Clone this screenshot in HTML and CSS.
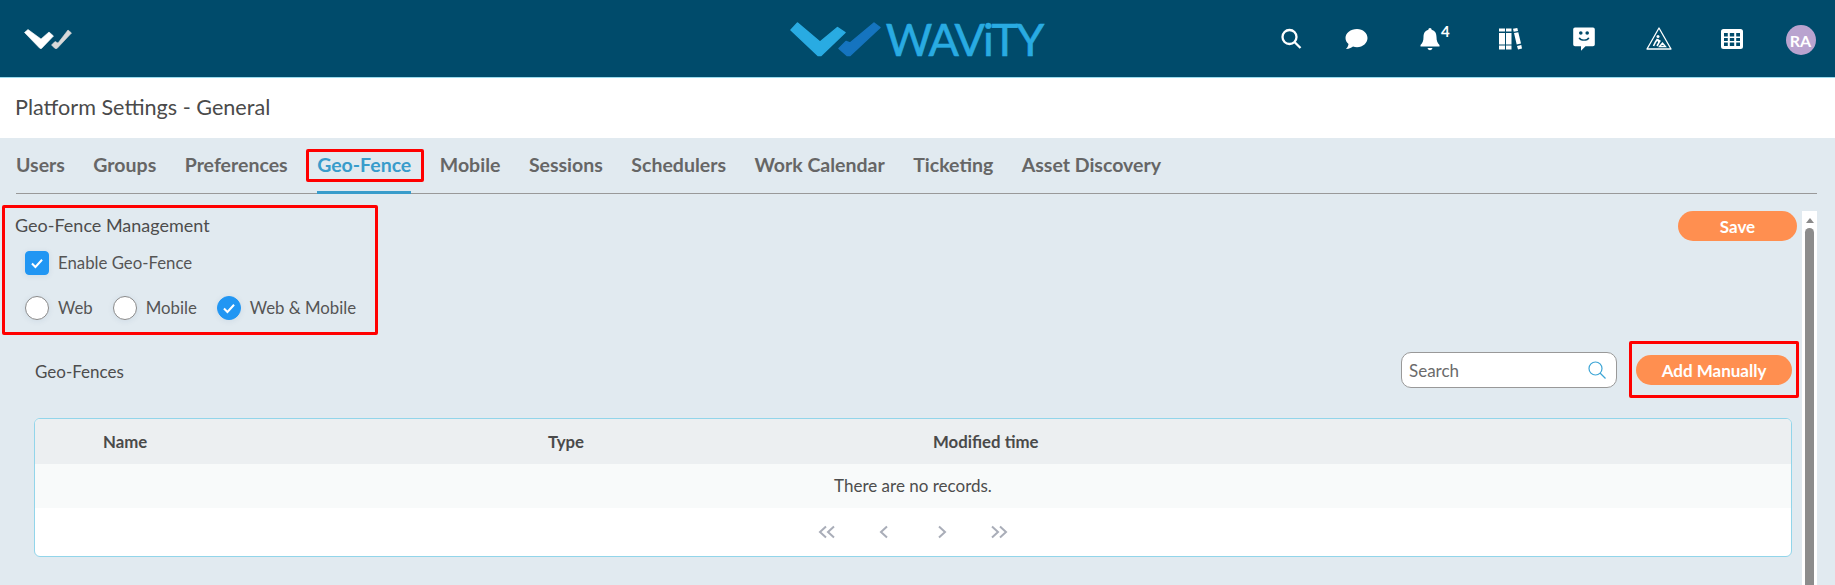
FILE: index.html
```html
<!DOCTYPE html>
<html lang="en">
<head>
<meta charset="utf-8">
<title>Platform Settings - General</title>
<link rel="stylesheet" href="styles.css">
</head>
<body>
<div class="page">
  <header class="topbar">
    <div class="brand-small">
      <svg class="mark-small" viewBox="0 0 48 20"><path class="m-w" d="M0.500 3.500 L4 0.500 L17 10 L25 3 L29.500 7 L17.500 19.500 L16 19.500 Z"/><path class="m-g" d="M27.500 16 L31 12.500 L34 14 L44 1 L47.500 4 L33 19.500 L31 19.500 Z"/></svg>
    </div>
    <div class="brand-main">
      <svg class="mark-main" viewBox="0 0 92 36"><path class="mm-a" d="M1 9 L7.500 2 L30 21 L47.500 6.500 L55 11.500 L31 34.500 L28 34.500 Z"/><path class="mm-b" d="M49 27.500 L56 20.500 L60 22 L84 2 L90 6.500 L60 34.500 L57 34.500 Z"/></svg>
      <span class="brand-name">WAViTY</span>
    </div>
    <nav class="tools">
      <span class="tool"><svg class="ic" width="22" height="22" viewBox="0 0 22 22"><circle cx="9.500" cy="9" r="7" fill="none" stroke="#fff" stroke-width="2.300"/><path d="M14.500 14 L20.500 20" stroke="#fff" stroke-width="2.300"/></svg></span>
      <span class="tool"><svg class="ic" width="24" height="22" viewBox="0 0 24 22"><path fill="#fff" d="M13 1 C6.500 1 1.500 5 1.500 10 C1.500 12.500 2.800 14.600 4.500 16 C4.300 18 3 20 2 21 C5.500 21 7.800 19.500 9 18.600 C10.300 19 11.600 19.200 13 19.200 C19 19.200 23.500 15 23.500 10 C23.500 5 19 1 13 1 Z"/></svg></span>
      <span class="tool tool-bell"><svg class="ic" width="20" height="24" viewBox="0 0 20 24"><path fill="#fff" d="M10 1 C11 1 11.600 1.800 11.600 2.800 C15 3.600 16.500 6.500 16.500 10 C16.500 14 17.500 16 19.500 18 L19.500 19.500 L0.500 19.500 L0.500 18 C2.500 16 3.500 14 3.500 10 C3.500 6.500 5 3.600 8.400 2.800 C8.400 1.800 9 1 10 1 Z M7.500 21 L12.500 21 C12 22.600 11 23.200 10 23.200 C9 23.200 8 22.600 7.500 21 Z"/></svg><sup class="bell-count">4</sup></span>
      <span class="tool"><svg class="ic" width="23" height="22" viewBox="0 0 23 22"><path fill="#fff" d="M0 0.500 H6 V3.500 H0 Z M0 5 H6 V16.500 H0 Z M0 17.500 H6 V21.500 H0 Z M7 0.500 H12.500 V3.500 H7 Z M7 5 H12.500 V16.500 H7 Z M7 17.500 H12.500 V21.500 H7 Z M14 0.800 L18.300 0 L19 3 L14.700 3.800 Z M15 5 L19.300 4.200 L22 15.500 L17.700 16.500 Z M18 18 L22.300 17 L23 20.500 L19 21.500 Z"/></svg></span>
      <span class="tool tool-smile"><svg class="ic" width="22" height="24" viewBox="0 0 22 24"><path fill="#fff" fill-rule="evenodd" d="M2 0.500 H20 Q21.800 0.500 21.800 2.300 V17.500 Q21.800 19.300 20 19.300 H12.500 L8 23.800 V19.300 H2 Q0.200 19.300 0.200 17.500 V2.300 Q0.200 0.500 2 0.500 Z M6 6 a1.800 1.800 0 1 0 3.600 0 a1.800 1.800 0 1 0 -3.600 0 Z M12.400 6 a1.800 1.800 0 1 0 3.600 0 a1.800 1.800 0 1 0 -3.600 0 Z M5.500 11 C6.500 14.800 15.500 14.800 16.500 11 L15 10.500 C14 13 8 13 7 10.500 Z"/></svg></span>
      <span class="tool"><svg class="ic" width="26" height="23" viewBox="0 0 26 23"><path fill="none" stroke="#fff" stroke-width="1.300" stroke-linejoin="round" d="M13 1 L25 22 H1 Z"/><circle cx="12" cy="9.500" r="1.500" fill="#fff"/><path fill="none" stroke="#fff" stroke-width="1.600" d="M11.500 12 L9.500 15 L7.500 19 M11.500 12 L13 15.500 L11 19 M12 13 L14.500 14.500"/><path fill="none" stroke="#fff" stroke-width="1.300" d="M13.500 19.500 L16.500 16 L19.500 19.500 Z"/></svg></span>
      <span class="tool"><svg class="ic" width="22" height="20" viewBox="0 0 22 20"><path fill="#fff" fill-rule="evenodd" d="M2.500 0 H19.500 Q22 0 22 2.500 V17.500 Q22 20 19.500 20 H2.500 Q0 20 0 17.500 V2.500 Q0 0 2.500 0 Z M3 4 V7.500 H6.800 V4 Z M8.800 4 V7.500 H13.200 V4 Z M15.200 4 V7.500 H19 V4 Z M3 9 V12 H6.800 V9 Z M8.800 9 V12 H13.200 V9 Z M15.200 9 V12 H19 V9 Z M3 13.500 V17 H6.800 V13.500 Z M8.800 13.500 V17 H13.200 V13.500 Z M15.200 13.500 V17 H19 V13.500 Z"/></svg></span>
      <span class="tool tool-user"><span class="avatar">RA</span></span>
    </nav>
  </header>

  <div class="titlebar">Platform Settings - General</div>

  <main class="main">
    <div class="tabs">
      <a class="tab">Users</a>
      <a class="tab">Groups</a>
      <a class="tab">Preferences</a>
      <a class="tab tab-active">Geo-Fence</a>
      <a class="tab">Mobile</a>
      <a class="tab">Sessions</a>
      <a class="tab">Schedulers</a>
      <a class="tab">Work Calendar</a>
      <a class="tab">Ticketing</a>
      <a class="tab">Asset Discovery</a>
    </div>

    <div class="panel">
      <div class="content">
        <div class="settings-row">
          <section class="settings">
            <h2 class="section-title">Geo-Fence Management</h2>
            <label class="opt opt-enable"><span class="box checked"><svg viewBox="0 0 24 24" class="tick"><path d="M6.500 12.500 L10.300 16.300 L17.500 8.500"/></svg></span>Enable Geo-Fence</label>
            <div class="radios">
              <label class="opt"><span class="radio"></span>Web</label>
              <label class="opt"><span class="radio"></span>Mobile</label>
              <label class="opt"><span class="radio checked"><svg viewBox="0 0 24 24" class="tick"><path d="M6.500 12.500 L10.300 16.300 L17.500 8.500"/></svg></span>Web &amp; Mobile</label>
            </div>
          </section>
          <button class="btn btn-save">Save</button>
        </div>

        <div class="toolbar">
          <span class="toolbar-title">Geo-Fences</span>
          <div class="search">
            <span class="search-text">Search</span>
            <svg width="20" height="20" viewBox="0 0 20 20"><circle cx="8.500" cy="8.500" r="6.500" fill="none" stroke="#3ea6d6" stroke-width="1.200"/><path d="M13 13 L18.500 18.500" stroke="#3ea6d6" stroke-width="1.200"/></svg>
          </div>
          <button class="btn btn-add">Add Manually</button>
        </div>

        <div class="table">
          <div class="thead"><span class="th th-name">Name</span><span class="th">Type</span><span class="th">Modified time</span></div>
          <div class="empty">There are no records.</div>
          <div class="pager">
            <svg width="18" height="14" viewBox="0 0 18 14"><path d="M8 1.500 L2 7 L8 12.500 M16 1.500 L10 7 L16 12.500"/></svg>
            <svg width="18" height="14" viewBox="0 0 18 14"><path d="M12 1.500 L6 7 L12 12.500"/></svg>
            <svg width="18" height="14" viewBox="0 0 18 14"><path d="M6 1.500 L12 7 L6 12.500"/></svg>
            <svg width="18" height="14" viewBox="0 0 18 14"><path d="M2 1.500 L8 7 L2 12.500 M10 1.500 L16 7 L10 12.500"/></svg>
          </div>
        </div>
      </div>
      <div class="scrollbar"><span class="sb-arrow"></span><span class="sb-thumb"></span></div>
    </div>
  </main>

  <div class="mark-box mark-tab"></div>
  <div class="mark-box mark-settings"></div>
  <div class="mark-box mark-add"></div>
</div>
</body>
</html>
```
FILE: styles.css
```css
* { box-sizing: border-box; }
html, body { margin: 0; height: 100%; }
body { font-family: Lato, "Open Sans", sans-serif; color: #555; background: #e1eaf0; overflow: hidden; }
.page { position: relative; width: 1835px; height: 585px; overflow: hidden; }

.topbar { height: 78px; background: #004b6b; border-bottom: 1px solid #9adbee; display: grid; grid-template-columns: 1fr auto 1fr; align-items: center; }
.brand-small { padding-left: 24px; }
.mark-small { display: block; width: 48px; height: 20px; }
.m-w { fill: #fff; stroke: #fff; stroke-width: .6; stroke-linejoin: round; }
.m-g { fill: #d9d9d9; stroke: #d9d9d9; stroke-width: .6; stroke-linejoin: round; }
.brand-main { display: flex; align-items: center; gap: 4px; margin-right: 3px; }
.mark-main { display: block; width: 92px; height: 36px; margin-top: 1px; }
.mm-a { fill: #29abe2; stroke: #29abe2; stroke-width: 1.500; stroke-linejoin: round; }
.mm-b { fill: #1574bf; stroke: #1574bf; stroke-width: 1.500; stroke-linejoin: round; }
.brand-name { font-size: 45px; line-height: 46px; color: #29abe2; letter-spacing: -2px; -webkit-text-stroke: .6px #29abe2; }
.tools { display: grid; grid-template-columns: 60px 70px 78px 82px 64px 88px 58px 74px; justify-self: end; height: 75px; align-items: center; }
.tool { display: flex; justify-content: center; align-items: center; position: relative; }
.tool-smile { padding-left: 2px; }
.tool-user { padding-left: 5px; }
.ic { display: block; }
.bell-count { position: absolute; left: 50px; top: -3px; font-size: 15px; line-height: 14px; font-weight: 700; color: #fff; margin: 0; }
.avatar { width: 30px; height: 30px; margin-top: 3px; border-radius: 50%; background: #b9a3cf; color: #fff; font-size: 16px; font-weight: 700; display: flex; align-items: center; justify-content: center; }

.titlebar { height: 60px; background: #fff; padding-left: 15px; font-size: 21.600px; line-height: 58px; color: #4a4a4a; }

.main { padding-left: 16px; }
.tabs { display: flex; gap: 28.500px; height: 56px; width: 1801px; border-bottom: 1px solid #999; align-items: stretch; }
.tab { font-size: 19.500px; font-weight: 700; color: #666; line-height: 54px; height: 56px; }
.tab-active { color: #389ccb; border-bottom: 3px solid #389ccb; margin-left: 1px; }

.panel { display: flex; margin-left: -16px; height: 391px; }
.content { width: 1802px; }
.settings-row { display: flex; justify-content: space-between; align-items: flex-start; padding: 17px 5px 0 15px; }
.settings { margin-top: 2px; }
.section-title { margin: 0; font-size: 18px; font-weight: 400; line-height: 24px; color: #4d4d4d; }
.opt { display: flex; align-items: center; gap: 9px; font-size: 16.800px; line-height: 24px; color: #555; }
.opt-enable { margin: 14px 0 0 10px; }
.radios { display: flex; margin: 21px 0 0 10px; gap: 20px; }
.box, .radio { width: 24px; height: 24px; background: #fff; display: block; border: 1px solid #8a8a8a; box-shadow: 0 1px 6px rgba(0, 60, 110, .08); }
.box { border-radius: 4px; }
.radio { border-radius: 50%; }
.box.checked, .radio.checked { background: #2196f3; border-color: #2196f3; }
.tick { display: block; width: 22px; height: 22px; }
.tick path { fill: none; stroke: #fff; stroke-width: 2.200; }

.btn { border: 0; border-radius: 15px; height: 30px; background: #ff8f50; color: #fff; font: 700 17px Lato, sans-serif; padding: 0; }
.btn-save { width: 119px; }
.btn-add { width: 156px; margin-right: 10px; }

.toolbar { display: flex; align-items: center; margin-top: 32px; height: 36px; padding-left: 35px; }
.toolbar-title { font-size: 17px; color: #4d4d4d; flex: 1; margin-top: 2px; }
.search { width: 216px; height: 36px; background: #fff; border: 1px solid #999; border-radius: 10px; display: flex; align-items: center; justify-content: space-between; padding: 0 9px 0 7px; margin-right: 19px; }
.search-text { font-size: 17px; color: #6b6b6b; }

.table { margin: 30px 10px 0 34px; height: 139px; background: #fff; border: 1px solid #92d5ea; border-radius: 6px; overflow: hidden; }
.thead { height: 45px; background: #eceff1; display: grid; grid-template-columns: 513px 385px 1fr; align-items: center; }
.th { font-size: 16.800px; font-weight: 700; color: #4a4a4a; }
.th-name { padding-left: 68px; }
.empty { height: 44px; background: #f8fafa; text-align: center; font-size: 17px; line-height: 44px; color: #4d4d4d; }
.pager { height: 48px; display: flex; justify-content: center; align-items: center; gap: 39.500px; }
.pager path { fill: none; stroke: #a9adb8; stroke-width: 2; }

.scrollbar { width: 15px; margin-top: 17px; background: #fff; display: flex; flex-direction: column; align-items: center; }
.sb-arrow { margin-top: 7px; width: 0; height: 0; border-left: 4px solid transparent; border-right: 4px solid transparent; border-bottom: 5px solid #8a8a8a; }
.sb-thumb { margin-top: 5px; width: 9px; flex: 1; background: #8c8c8c; border-radius: 5px 5px 0 0; }

.mark-box { position: absolute; border: 3px solid #f00; border-radius: 2px; }
.mark-tab { left: 306px; top: 149px; width: 118px; height: 33px; }
.mark-settings { left: 2px; top: 205px; width: 376px; height: 130px; }
.mark-add { left: 1629px; top: 341px; width: 170px; height: 57px; }
```
